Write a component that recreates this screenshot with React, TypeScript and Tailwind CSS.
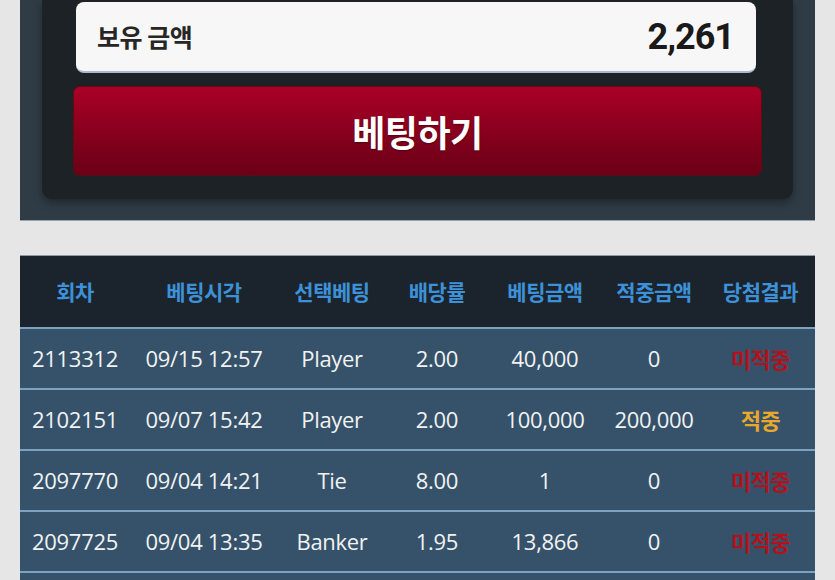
import React from 'react'

type Row = {
  round: string
  time: string
  pick: string
  odds: string
  amount: string
  win: string
  result: 'win' | 'lose'
}

const rows: Row[] = [
  { round: '2113312', time: '09/15 12:57', pick: 'Player', odds: '2.00', amount: '40,000', win: '0', result: 'lose' },
  { round: '2102151', time: '09/07 15:42', pick: 'Player', odds: '2.00', amount: '100,000', win: '200,000', result: 'win' },
  { round: '2097770', time: '09/04 14:21', pick: 'Tie', odds: '8.00', amount: '1', win: '0', result: 'lose' },
  { round: '2097725', time: '09/04 13:35', pick: 'Banker', odds: '1.95', amount: '13,866', win: '0', result: 'lose' },
]

const headers = ['회차', '베팅시각', '선택베팅', '배당률', '베팅금액', '적중금액', '당첨결과']

const cols = 'grid grid-cols-[110px_148px_108px_102px_114px_104px_109px]'

export default function App() {
  return (
    <div
      className="min-h-screen overflow-hidden bg-[#e6e6e6]"
      style={{ fontFamily: '"Open Sans", "Noto Sans CJK KR", sans-serif' }}
    >
      {/* bet panel */}
      <div className="mx-[20px] bg-[#2f3c46] border-b border-[#8ea3b6] px-[22px] pb-[21px]">
        <div className="bg-[#1c2226] rounded-b-[10px] shadow-[0_4px_8px_rgba(0,0,0,0.35)] px-[31px] pt-[2px] pb-[23px]">
          <div className="ml-[3px] mr-[6px] h-[71px] bg-[#f7f7f7] rounded-[8px] border-b-2 border-[#a9b8cb] flex items-center justify-between pl-[21px] pr-[22px]">
            <span
              className="text-[25px] font-bold text-[#262626] tracking-[-0.5px]"
              style={{ fontFamily: '"Noto Sans CJK KR", sans-serif' }}
            >
              보유 금액
            </span>
            <span
              className="text-[36px] font-bold text-[#1a1a1a] tracking-[-1px]"
              style={{ fontFamily: 'Roboto, sans-serif' }}
            >
              2,261
            </span>
          </div>
          <button className="mt-[13px] w-full h-[90px] rounded-[7px] border border-[#5c0c14] bg-gradient-to-b from-[#aa0026] to-[#6a0016] flex items-center justify-center">
            <span
              className="text-[36px] font-bold text-white tracking-[-0.5px] [text-shadow:0_1px_2px_rgba(0,0,0,0.4)]"
              style={{ fontFamily: '"Noto Sans CJK KR", sans-serif' }}
            >
              베팅하기
            </span>
          </button>
        </div>
      </div>

      {/* history table */}
      <div className="mx-[20px] mt-[34px] border-t border-[#8e9ba6]">
        <div className={`${cols} h-[73px] bg-[#1b242c] border-b-2 border-[#7da2c0] items-center`}>
          {headers.map((h) => (
            <div
              key={h}
              className="text-center text-[21px] font-bold text-[#3d91d8] tracking-[-0.5px]"
              style={{ fontFamily: '"Noto Sans CJK KR", sans-serif' }}
            >
              {h}
            </div>
          ))}
        </div>
        {rows.map((r) => (
          <div
            key={r.round}
            className={`${cols} h-[61px] bg-[#35526a] border-b-2 border-[#7da2c0] items-center text-[22px] tracking-[-0.3px] text-[#f2f2f2]`}
          >
            <div className="text-center">{r.round}</div>
            <div className="text-center">{r.time}</div>
            <div className="text-center">{r.pick}</div>
            <div className="text-center">{r.odds}</div>
            <div className="text-center">{r.amount}</div>
            <div className="text-center">{r.win}</div>
            <div
              className={`text-center text-[22px] font-bold tracking-[-0.5px] ${r.result === 'win' ? 'text-[#e9a82a]' : 'text-[#b3121c]'}`}
              style={{ fontFamily: '"Noto Sans CJK KR", sans-serif' }}
            >
              {r.result === 'win' ? '적중' : '미적중'}
            </div>
          </div>
        ))}
        {/* next row, below the fold */}
        <div className="h-[61px] bg-[#35526a]" />
      </div>
    </div>
  )
}
